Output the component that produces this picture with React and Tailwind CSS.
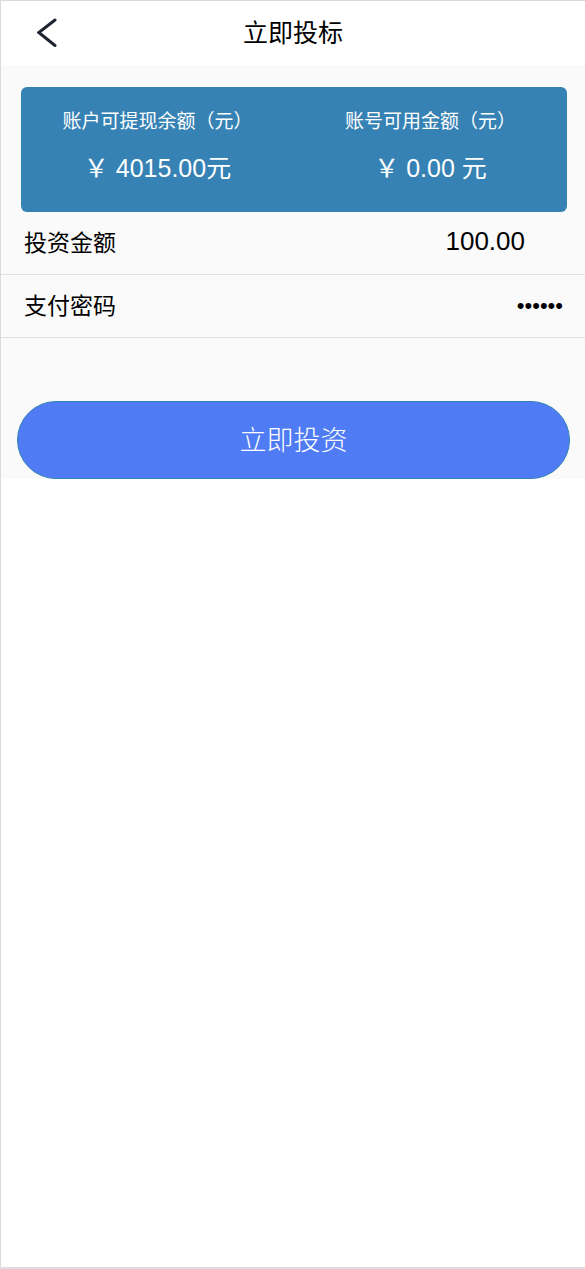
import { useState } from "react";

const BALANCES = [
  { label: "账户可提现余额（元）", value: "￥ 4015.00元" },
  { label: "账号可用金额（元）", value: "￥ 0.00 元" },
];

function Header() {
  return (
    <header className="relative flex h-16 items-center justify-center bg-white">
      <button type="button" aria-label="返回" className="absolute left-9 top-4">
        <svg
          className="h-8 w-6"
          viewBox="0 0 24 32"
          fill="none"
          stroke="#1c2530"
          strokeWidth="3"
          strokeLinecap="round"
        >
          <path d="M18 3 L1.8 15.5 L18 28.5" />
        </svg>
      </button>
      <h1 className="text-[25px] leading-8">立即投标</h1>
    </header>
  );
}

function BalanceCard() {
  return (
    <section className="mr-[18px] ml-5 grid h-[125px] grid-cols-2 rounded-md bg-[#3682b4] pt-[21px] text-center text-white">
      {BALANCES.map((item) => (
        <div key={item.label}>
          <p className="text-[19px] leading-7">{item.label}</p>
          <p className="mt-4 text-[25px] leading-8">{item.value}</p>
        </div>
      ))}
    </section>
  );
}

export default function App() {
  const [amount, setAmount] = useState("100.00");
  const [password, setPassword] = useState("123456");

  return (
    <div className="flex min-h-screen flex-col border-t border-b-2 border-l border-t-[#dadada] border-b-[#dcdee6] border-l-[#dadada] bg-white font-['Liberation_Sans','Noto_Sans_CJK_SC',sans-serif] text-black">
      <Header />

      <form className="bg-[#fafafa] pt-[22px]" onSubmit={(e) => e.preventDefault()}>
        <BalanceCard />

        <div className="flex h-[63px] items-center border-b border-[#e2e2e2] pr-[60px] pl-[23px]">
          <label htmlFor="amount" className="shrink-0 text-[23px] leading-8">
            投资金额
          </label>
          <input
            id="amount"
            type="text"
            inputMode="decimal"
            className="min-w-0 flex-1 bg-transparent pb-1 text-right text-[26px] leading-8 outline-none"
            value={amount}
            onChange={(e) => setAmount(e.target.value)}
          />
        </div>

        <div className="flex h-[63px] items-center border-b border-[#e2e2e2] pr-[22px] pl-[23px]">
          <label htmlFor="password" className="shrink-0 text-[23px] leading-8">
            支付密码
          </label>
          <input
            id="password"
            type="password"
            className="min-w-0 flex-1 bg-transparent text-right text-[22px] leading-8 outline-none"
            value={password}
            onChange={(e) => setPassword(e.target.value)}
          />
        </div>

        <div className="pt-[63px] pr-[15px] pl-4">
          <button
            type="submit"
            className="block h-[78px] w-full rounded-full border border-[#3682b4] bg-[#4f7cf4] pt-0.5 text-[27px] leading-8 font-light text-white"
          >
            立即投资
          </button>
        </div>
      </form>
    </div>
  );
}
